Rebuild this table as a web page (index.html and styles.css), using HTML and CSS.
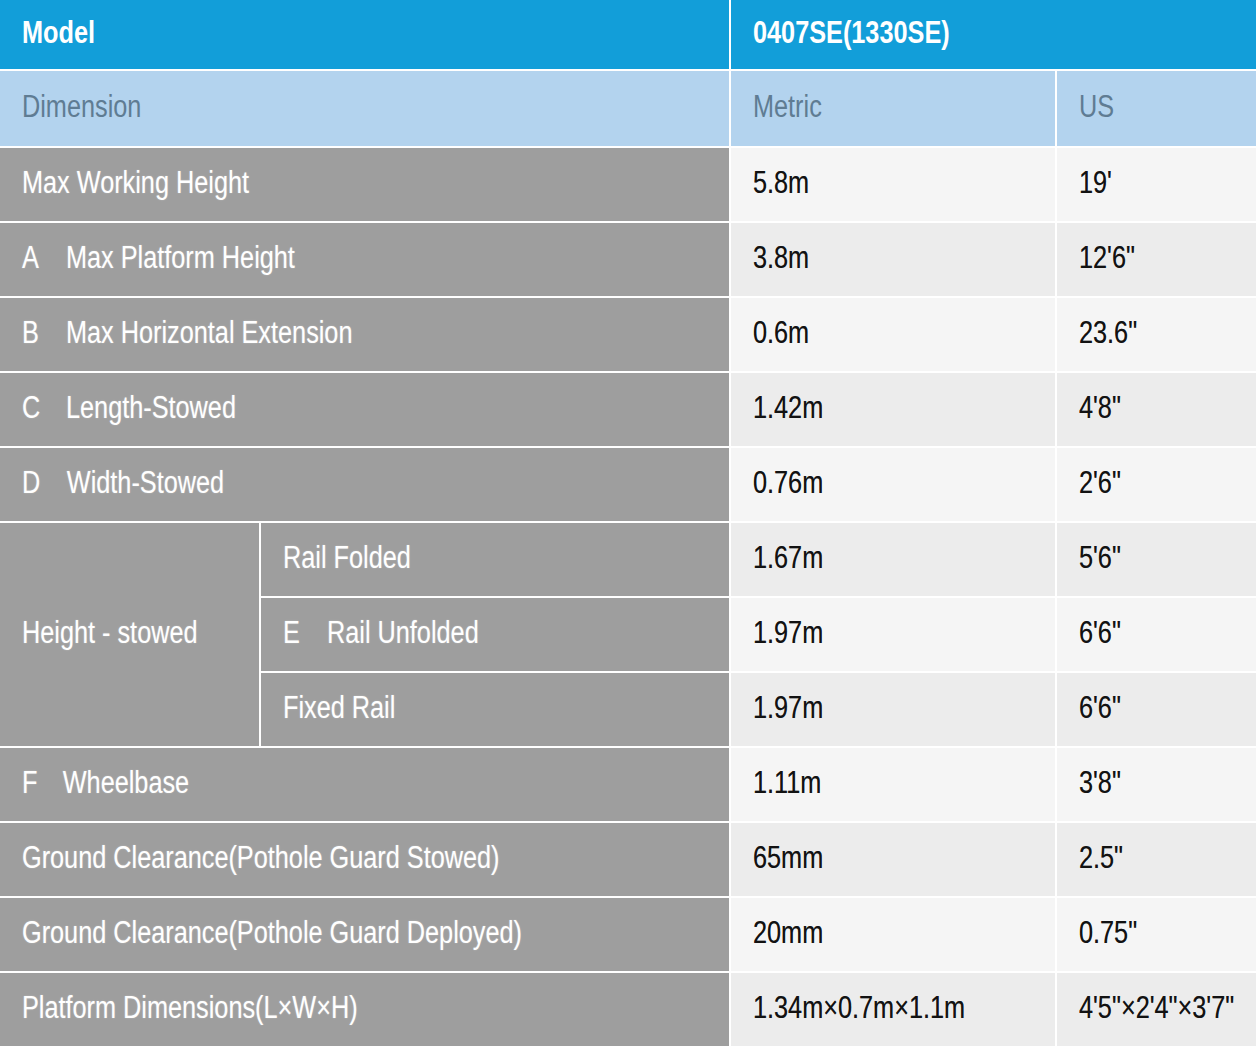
FILE: index.html
```html
<!DOCTYPE html>
<html>
<head>
<meta charset="utf-8">
<link rel="stylesheet" href="styles.css">
</head>
<body>
<table class="spec">
  <colgroup>
    <col class="c-sub">
    <col class="c-label">
    <col class="c-metric">
    <col class="c-us">
  </colgroup>
  <tr class="model">
    <th colspan="2"><span class="t">Model</span></th>
    <th colspan="2"><span class="t">0407SE(1330SE)</span></th>
  </tr>
  <tr class="dim">
    <th colspan="2"><span class="t">Dimension</span></th>
    <th><span class="t">Metric</span></th>
    <th><span class="t">US</span></th>
  </tr>
  <tr class="light">
    <td class="lbl" colspan="2"><span class="t">Max Working Height</span></td>
    <td><span class="t">5.8m</span></td><td><span class="t">19'</span></td>
  </tr>
  <tr class="dark">
    <td class="lbl" colspan="2"><span class="t"><span class="key">A</span>Max Platform Height</span></td>
    <td><span class="t">3.8m</span></td><td><span class="t">12'6"</span></td>
  </tr>
  <tr class="light">
    <td class="lbl" colspan="2"><span class="t"><span class="key">B</span>Max Horizontal Extension</span></td>
    <td><span class="t">0.6m</span></td><td><span class="t">23.6"</span></td>
  </tr>
  <tr class="dark">
    <td class="lbl" colspan="2"><span class="t"><span class="key">C</span>Length-Stowed</span></td>
    <td><span class="t">1.42m</span></td><td><span class="t">4'8"</span></td>
  </tr>
  <tr class="light">
    <td class="lbl" colspan="2"><span class="t"><span class="key kd">D</span>Width-Stowed</span></td>
    <td><span class="t">0.76m</span></td><td><span class="t">2'6"</span></td>
  </tr>
  <tr class="dark">
    <td class="lbl" rowspan="3"><span class="t">Height - stowed</span></td>
    <td class="lbl"><span class="t">Rail Folded</span></td>
    <td><span class="t">1.67m</span></td><td><span class="t">5'6"</span></td>
  </tr>
  <tr class="light">
    <td class="lbl"><span class="t"><span class="key">E</span>Rail Unfolded</span></td>
    <td><span class="t">1.97m</span></td><td><span class="t">6'6"</span></td>
  </tr>
  <tr class="dark">
    <td class="lbl"><span class="t">Fixed Rail</span></td>
    <td><span class="t">1.97m</span></td><td><span class="t">6'6"</span></td>
  </tr>
  <tr class="light">
    <td class="lbl" colspan="2"><span class="t"><span class="key kf">F</span>Wheelbase</span></td>
    <td><span class="t">1.11m</span></td><td><span class="t">3'8"</span></td>
  </tr>
  <tr class="dark">
    <td class="lbl" colspan="2"><span class="t">Ground Clearance(Pothole Guard Stowed)</span></td>
    <td><span class="t">65mm</span></td><td><span class="t">2.5"</span></td>
  </tr>
  <tr class="light">
    <td class="lbl" colspan="2"><span class="t">Ground Clearance(Pothole Guard Deployed)</span></td>
    <td><span class="t">20mm</span></td><td><span class="t">0.75"</span></td>
  </tr>
  <tr class="dark">
    <td class="lbl" colspan="2"><span class="t">Platform Dimensions(L×W×H)</span></td>
    <td><span class="t">1.34m×0.7m×1.1m</span></td><td><span class="t">4'5"×2'4"×3'7"</span></td>
  </tr>
</table>
</body>
</html>
```

FILE: styles.css
```css
html, body {
  margin: 0;
  padding: 0;
  background: #ffffff;
}

.spec {
  width: 1256px;
  border-collapse: collapse;
  table-layout: fixed;
  font-family: "Liberation Sans", Arial, sans-serif;
  font-size: 31px;
  color: #121212;
}

.c-sub { width: 260px; }
.c-label { width: 470px; }
.c-metric { width: 326px; }
.c-us { width: 200px; }

.spec th,
.spec td {
  border: 2px solid #ffffff;
  padding: 0 0 3px 22px;
  height: 70px;
  text-align: left;
  vertical-align: middle;
  white-space: nowrap;
}

.spec tr:first-child th { border-top: 0; }
.spec th:first-child,
.spec td:first-child { border-left: 0; }
.spec th:last-child,
.spec td:last-child { border-right: 0; }

.t {
  display: inline-block;
  transform: scaleX(0.815);
  transform-origin: left center;
}

.model th {
  background: #129ed9;
  color: #ffffff;
  font-weight: bold;
  height: 66px;
}

.dim th {
  background: #b3d3ee;
  color: #5f7c93;
  font-weight: normal;
  height: 72px;
}

.light td { background: #f5f5f5; }
.dark td { background: #ececec; }

.spec td {
  text-shadow: 0 0 0.6px rgba(0, 0, 0, 0.5);
}

.spec td.lbl {
  background: #9e9e9e;
  color: #ffffff;
  text-shadow: 0 0 2px rgba(255, 255, 255, 0.35);
}

.key {
  display: inline-block;
  width: 54px;
}
.key.kd { width: 55px; }
.key.kf { width: 50px; }
```
